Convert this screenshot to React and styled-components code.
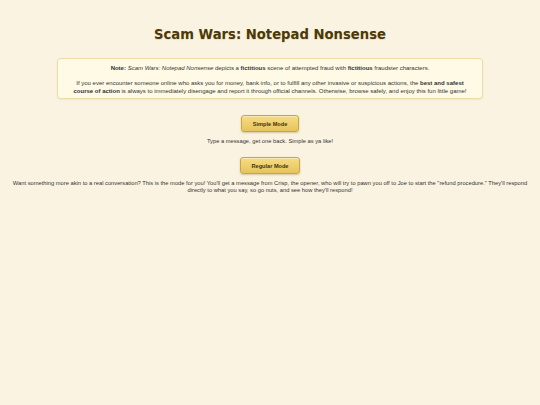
import React from "react";
import styled, { createGlobalStyle } from "styled-components";

const GlobalStyle = createGlobalStyle`
  html, body {
    margin: 0;
    padding: 0;
    background: #fbf3e1;
  }

  body {
    font-family: "Liberation Sans", Arial, sans-serif;
    color: #333;
  }
`;

const Page = styled.main`
  min-height: 405px;
  padding: 27px 10px 20px;
  box-sizing: border-box;
  text-align: center;
`;

const Title = styled.h1`
  margin: 0 0 16px;
  font-family: "Comic Sans MS", "DejaVu Sans", sans-serif;
  font-size: 13.2px;
  font-weight: 700;
  color: #4b3a08;
  text-shadow: 0 1px 1px rgba(120, 90, 0, 0.15);
`;

const Notice = styled.section`
  width: 426px;
  margin: 0 auto;
  padding: 5px 10px 3px;
  box-sizing: border-box;
  background: #fffae6;
  border: 1px solid #ecdda8;
  border-radius: 4px;
  box-shadow: 0 1px 2px rgba(160, 130, 40, 0.12);

  p {
    margin: 0;
    font-size: 6px;
    line-height: 8px;
    color: #333;
  }

  p + p {
    margin-top: 7px;
  }
`;

const Mode = styled.div`
  display: flex;
  flex-direction: column;
  align-items: center;
  margin-top: ${(p) => p.$top}px;
`;

const ModeButton = styled.button`
  width: ${(p) => p.$width}px;
  height: 17px;
  padding: 0;
  border: 1px solid #c9a641;
  border-radius: 3px;
  background: linear-gradient(180deg, #f6dc83 0%, #e6c45c 100%);
  box-shadow: 0 1px 2px rgba(120, 90, 10, 0.3), inset 0 1px 0 rgba(255, 255, 255, 0.4);
  font-family: "Liberation Sans", Arial, sans-serif;
  font-size: 5.6px;
  font-weight: 700;
  color: #3d3410;
  cursor: pointer;
`;

const ModeText = styled.p`
  margin: 6px 0 0;
  max-width: 520px;
  font-size: 5.75px;
  line-height: 7px;
  color: #333;
`;

export default function App() {
  return (
    <>
      <GlobalStyle />
      <Page>
        <Title>Scam Wars: Notepad Nonsense</Title>

        <Notice>
          <p>
            <b>Note:</b> <i>Scam Wars: Notepad Nonsense</i> depicts a <b>fictitious</b> scene of
            attempted fraud with <b>fictitious</b> fraudster characters.
          </p>
          <p>
            If you ever encounter someone online who asks you for money, bank info, or to fulfill any
            other invasive or suspicious actions, the <b>best and safest course of action</b> is
            always to immediately disengage and report it through official channels. Otherwise,
            browse safely, and enjoy this fun little game!
          </p>
        </Notice>

        <Mode $top={16}>
          <ModeButton $width={58}>Simple Mode</ModeButton>
          <ModeText>Type a message, get one back. Simple as ya like!</ModeText>
        </Mode>

        <Mode $top={12}>
          <ModeButton $width={60}>Regular Mode</ModeButton>
          <ModeText>
            Want something more akin to a real conversation? This is the mode for you! You'll get a
            message from Crisp, the opener, who will try to pawn you off to Joe to start the "refund
            procedure." They'll respond directly to what you say, so go nuts, and see how they'll
            respond!
          </ModeText>
        </Mode>
      </Page>
    </>
  );
}
